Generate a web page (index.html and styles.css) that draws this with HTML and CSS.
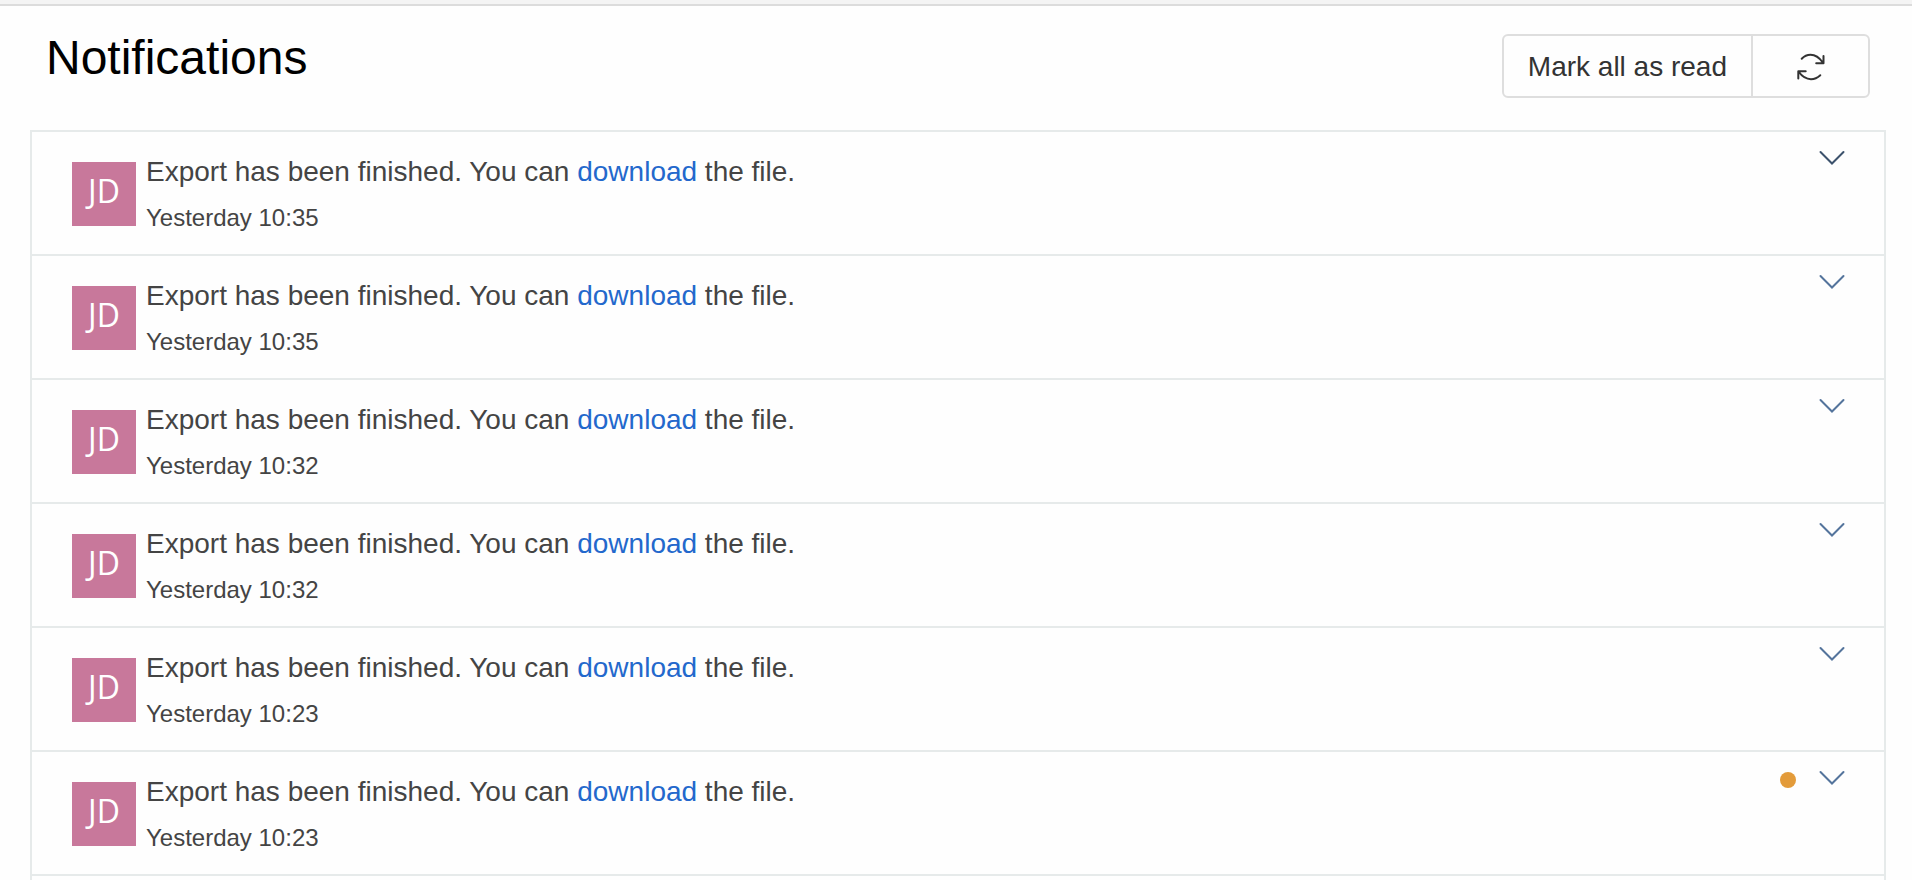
FILE: index.html
```html
<!DOCTYPE html>
<html lang="en">
<head>
<meta charset="utf-8">
<title>Notifications</title>
<link rel="stylesheet" href="styles.css">
</head>
<body>
<main class="page">
  <header class="page-header">
    <h1 class="page-title">Notifications</h1>
    <div class="button-group">
      <button class="button" type="button">Mark all as read</button>
      <button class="button button-refresh" type="button" aria-label="Refresh">
        <svg class="refresh-icon" viewBox="0 0 28 28" aria-hidden="true"><path d="M4.700 5.800Q8.500 1.800 13.500 1.800Q20.500 1.800 26 9.800M26.500 3V10.200H19.200M23.300 22.200Q19 26.200 14 26.200Q7 26.200 1.500 18.500M1.300 25.500V18.300H8.700"/></svg>
      </button>
    </div>
  </header>
  <ul class="list">
    <li class="item">
      <span class="avatar">JD</span>
      <div class="content"><p class="message">Export has been finished. You can <a class="link" href="#">download</a> the file.</p><time class="time">Yesterday 10:35</time></div>
      <button class="toggle toggle-active" type="button" aria-label="Expand"><svg class="chevron" viewBox="0 0 26 16" aria-hidden="true"><path d="M1.500 2L13 13.500L24.500 2"/></svg></button>
    </li>
    <li class="item">
      <span class="avatar">JD</span>
      <div class="content"><p class="message">Export has been finished. You can <a class="link" href="#">download</a> the file.</p><time class="time">Yesterday 10:35</time></div>
      <button class="toggle" type="button" aria-label="Expand"><svg class="chevron" viewBox="0 0 26 16" aria-hidden="true"><path d="M1.500 2L13 13.500L24.500 2"/></svg></button>
    </li>
    <li class="item">
      <span class="avatar">JD</span>
      <div class="content"><p class="message">Export has been finished. You can <a class="link" href="#">download</a> the file.</p><time class="time">Yesterday 10:32</time></div>
      <button class="toggle" type="button" aria-label="Expand"><svg class="chevron" viewBox="0 0 26 16" aria-hidden="true"><path d="M1.500 2L13 13.500L24.500 2"/></svg></button>
    </li>
    <li class="item">
      <span class="avatar">JD</span>
      <div class="content"><p class="message">Export has been finished. You can <a class="link" href="#">download</a> the file.</p><time class="time">Yesterday 10:32</time></div>
      <button class="toggle" type="button" aria-label="Expand"><svg class="chevron" viewBox="0 0 26 16" aria-hidden="true"><path d="M1.500 2L13 13.500L24.500 2"/></svg></button>
    </li>
    <li class="item">
      <span class="avatar">JD</span>
      <div class="content"><p class="message">Export has been finished. You can <a class="link" href="#">download</a> the file.</p><time class="time">Yesterday 10:23</time></div>
      <button class="toggle" type="button" aria-label="Expand"><svg class="chevron" viewBox="0 0 26 16" aria-hidden="true"><path d="M1.500 2L13 13.500L24.500 2"/></svg></button>
    </li>
    <li class="item">
      <span class="avatar">JD</span>
      <div class="content"><p class="message">Export has been finished. You can <a class="link" href="#">download</a> the file.</p><time class="time">Yesterday 10:23</time></div>
      <span class="unread" role="img" aria-label="Unread"></span>
      <button class="toggle" type="button" aria-label="Expand"><svg class="chevron" viewBox="0 0 26 16" aria-hidden="true"><path d="M1.500 2L13 13.500L24.500 2"/></svg></button>
    </li>
  </ul>
</main>
</body>
</html>
```

FILE: styles.css
```css
* {
  box-sizing: border-box;
}

body {
  margin: 0;
  border-top: 4px solid #f4f4f4;
  background: #fefefe;
  color: #444;
  font-family: "Liberation Sans", Arial, sans-serif;
}

.page {
  border-top: 2px solid #dcdcdc;
  padding: 28px 26px 0 30px;
}

.page-header {
  display: flex;
  justify-content: space-between;
  align-items: flex-start;
  padding: 0 16px 32px;
}

.page-title {
  margin: 0;
  color: #000;
  font-size: 48px;
  font-weight: 400;
  line-height: 48px;
}

.button-group {
  display: flex;
  border: 2px solid #dedede;
  border-radius: 6px;
}

.button {
  display: flex;
  align-items: center;
  justify-content: center;
  height: 60px;
  padding: 2px 24px 0;
  border: 0;
  background: none;
  color: #333;
  font-family: inherit;
  font-size: 28px;
}

.button-refresh {
  width: 117px;
  border-left: 2px solid #dedede;
}

.refresh-icon {
  width: 28px;
  height: 28px;
  fill: none;
  stroke: #333;
  stroke-width: 2;
  stroke-linecap: round;
  stroke-linejoin: round;
}

.list {
  margin: 0;
  padding: 0 0 4px;
  border: 2px solid #e6eaea;
  border-bottom: 0;
  list-style: none;
}

.item {
  display: flex;
  align-items: flex-start;
  min-height: 124px;
  padding: 18px 39px 0 40px;
  border-bottom: 2px solid #e6eaea;
}

.avatar {
  display: flex;
  align-items: center;
  justify-content: center;
  width: 64px;
  height: 64px;
  margin: 12px 10px 0 0;
  padding-bottom: 8px;
  background: #c8789b;
  color: #fff;
  font-family: "Open Sans", sans-serif;
  font-size: 32px;
}

.content {
  flex: 1;
}

.message {
  margin: 0 0 4px;
  font-size: 28px;
  line-height: 44px;
}

.time {
  display: block;
  font-size: 24px;
  line-height: 40px;
}

.link {
  color: #2368cc;
  text-decoration: none;
}

.toggle {
  padding: 0;
  border: 0;
  background: none;
  color: #54749c;
}

.toggle-active {
  color: #3c526c;
}

.chevron {
  display: block;
  width: 26px;
  height: 16px;
  fill: none;
  stroke: currentColor;
  stroke-width: 2;
  stroke-linecap: round;
}

.unread {
  width: 16px;
  height: 16px;
  margin: 2px 23px 0 0;
  border-radius: 50%;
  background: #e39b3a;
}
```
